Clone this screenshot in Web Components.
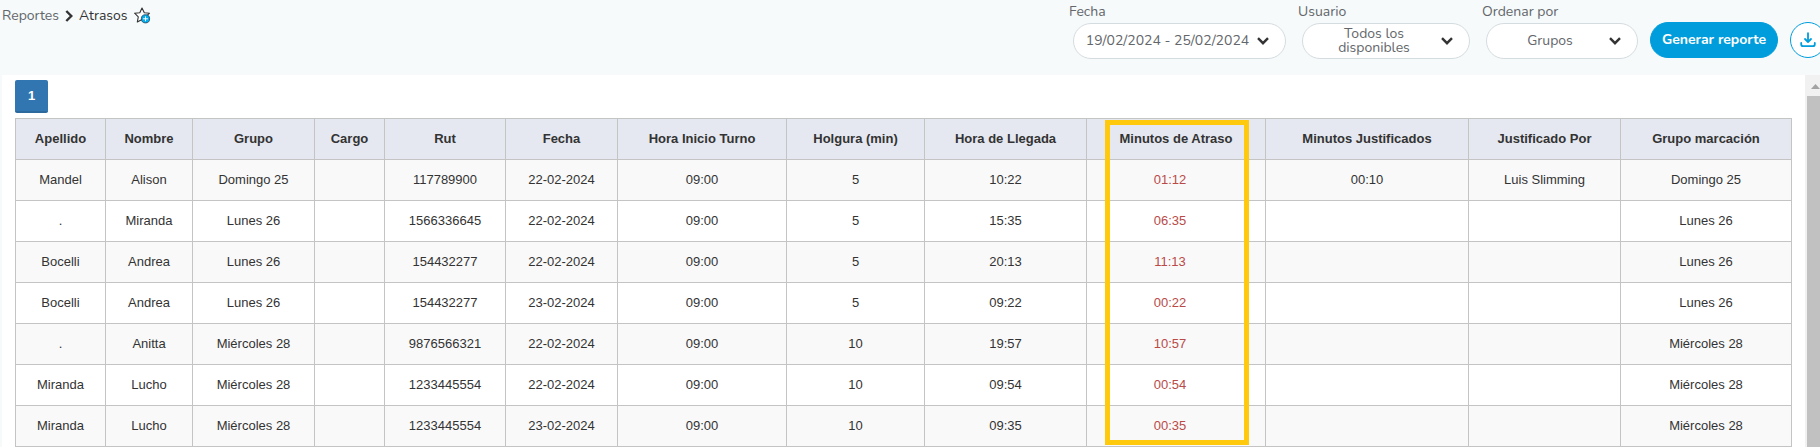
<!DOCTYPE html>
<html lang="es">
<head>
<meta charset="utf-8">
<meta name="viewport" content="width=device-width, initial-scale=1">
<title>Reportes - Atrasos</title>
<style>
  :root {
    --page: #f6fafb;
    --primary: #009ddc;
    --text: #333333;
    --muted: #63666a;
    --border: #d5dcdf;
    --font-ui: Nunito, Lato, sans-serif;
    --font-table: "Liberation Sans", Arial, sans-serif;
  }

  body {
    margin: 0;
    background: var(--page);
    color: var(--text);
    font-family: var(--font-ui);
    font-size: 14px;
  }
</style>
</head>
<body>
<late-report></late-report>

<script>
const CHEVRON = `
  <svg class="chevron" width="12" height="8" viewBox="0 0 12 8" aria-hidden="true">
    <path d="M1 1.2 6 6.2 11 1.2" fill="none" stroke="#333" stroke-width="2.4"/>
  </svg>`;

class BreadCrumb extends HTMLElement {
  constructor() {
    super();
    this.attachShadow({ mode: 'open' });
  }

  connectedCallback() {
    this.shadowRoot.innerHTML = `
      <style>
        :host { display: block; }
        nav {
          display: flex;
          align-items: center;
          gap: 6px;
          line-height: 16px;
        }
        a { color: var(--muted); text-decoration: none; }
        button {
          display: flex;
          padding: 0;
          border: 0;
          background: none;
          cursor: pointer;
        }
      </style>
      <nav aria-label="Ruta">
        <a href="#reportes">Reportes</a>
        <svg width="8" height="12" viewBox="0 0 8 12" aria-hidden="true">
          <path d="M1.3 1 6.3 6 1.3 11" fill="none" stroke="#333" stroke-width="2.4"/>
        </svg>
        <span aria-current="page"><slot></slot></span>
        <button aria-label="Agregar a favoritos">
          <svg width="17" height="17" viewBox="0 0 17 17">
            <path d="M8 1 10.3 5.7 15.5 6.2 11.7 9.8 12.7 15 8 12.5 3.3 15 4.3 9.8.6 6.2 5.8 5.7Z" fill="#fff" stroke="#333" stroke-width="1.1" stroke-linejoin="round"/>
            <circle cx="11.5" cy="11.8" r="4.1" fill="#00aeef" stroke="#214f69" stroke-width=".9"/>
            <path d="M11.5 9.4v4.8M9.1 11.8h4.8" stroke="#fff" stroke-width="1"/>
          </svg>
        </button>
      </nav>
    `;
  }
}

class FilterField extends HTMLElement {
  constructor() {
    super();
    this.attachShadow({ mode: 'open' });
  }

  connectedCallback() {
    const label = this.getAttribute('label');
    const value = this.getAttribute('value');
    const isSelect = this.getAttribute('type') === 'select';
    const control = isSelect
      ? `<select id="control"><option>${value}</option></select>${CHEVRON}`
      : `<button id="control" aria-haspopup="true"><span>${value}</span>${CHEVRON}</button>`;

    this.shadowRoot.innerHTML = `
      <style>
        :host { display: block; flex: none; }
        label {
          display: block;
          color: var(--muted);
          line-height: 16px;
          margin-bottom: 3px;
        }
        .box {
          display: grid;
          align-items: center;
          margin-left: 4px;
        }
        button, select {
          grid-area: 1 / 1;
          box-sizing: border-box;
          width: 100%;
          height: 36px;
          border: 1px solid var(--border);
          border-radius: 18px;
          background: #fff;
          color: var(--muted);
          font: inherit;
          line-height: 14px;
          text-align: center;
          cursor: pointer;
        }
        button {
          display: flex;
          align-items: center;
          gap: 8px;
          padding: 0 16px 0 12px;
        }
        button span {
          flex: 1;
          white-space: nowrap;
        }
        :host([label="Fecha"]) button {
          gap: 6px;
          padding-left: 10px;
        }
        select {
          appearance: none;
          padding: 0 36px 0 12px;
          text-align-last: center;
        }
        .chevron { flex: none; }
        .box > .chevron {
          grid-area: 1 / 1;
          justify-self: end;
          margin-right: 17px;
          pointer-events: none;
        }
      </style>
      <label for="control">${label}</label>
      <div class="box">${control}</div>
    `;
  }
}

class ActionButton extends HTMLElement {
  constructor() {
    super();
    this.attachShadow({ mode: 'open' });
  }

  connectedCallback() {
    const name = this.getAttribute('name');
    this.shadowRoot.innerHTML = `
      <style>
        :host { display: block; flex: none; }
        button {
          display: flex;
          align-items: center;
          justify-content: center;
          box-sizing: border-box;
          width: 100%;
          height: 36px;
          padding: 0 0 2px;
          border: 1px solid var(--primary);
          border-radius: 18px;
          background: var(--primary);
          color: #fff;
          font: inherit;
          font-weight: 700;
          cursor: pointer;
        }
        :host([outline]) button {
          padding: 0;
          background: #fff;
          color: var(--primary);
        }
      </style>
      <button ${name ? `aria-label="${name}"` : ''}><slot></slot></button>
    `;
  }
}

class ReportTable extends HTMLElement {
  constructor() {
    super();
    this.attachShadow({ mode: 'open' });
    this.columns = [
      ['Apellido', 90], ['Nombre', 87], ['Grupo', 122], ['Cargo', 70], ['Rut', 121],
      ['Fecha', 112], ['Hora Inicio Turno', 169], ['Holgura (min)', 138],
      ['Hora de Llegada', 162], ['Minutos de Atraso', 179],
      ['Minutos Justificados', 203], ['Justificado Por', 152], ['Grupo marcación', 171]
    ];
    this.rows = [
      ['Mandel', 'Alison', 'Domingo 25', '', '117789900', '22-02-2024', '09:00', '5', '10:22', '01:12', '00:10', 'Luis Slimming', 'Domingo 25'],
      ['.', 'Miranda', 'Lunes 26', '', '1566336645', '22-02-2024', '09:00', '5', '15:35', '06:35', '', '', 'Lunes 26'],
      ['Bocelli', 'Andrea', 'Lunes 26', '', '154432277', '22-02-2024', '09:00', '5', '20:13', '11:13', '', '', 'Lunes 26'],
      ['Bocelli', 'Andrea', 'Lunes 26', '', '154432277', '23-02-2024', '09:00', '5', '09:22', '00:22', '', '', 'Lunes 26'],
      ['.', 'Anitta', 'Miércoles 28', '', '9876566321', '22-02-2024', '09:00', '10', '19:57', '10:57', '', '', 'Miércoles 28'],
      ['Miranda', 'Lucho', 'Miércoles 28', '', '1233445554', '22-02-2024', '09:00', '10', '09:54', '00:54', '', '', 'Miércoles 28'],
      ['Miranda', 'Lucho', 'Miércoles 28', '', '1233445554', '23-02-2024', '09:00', '10', '09:35', '00:35', '', '', 'Miércoles 28']
    ];
  }

  connectedCallback() {
    const cols = this.columns.map(([, width]) => `<col style="width: ${width}px">`).join('');
    const head = this.columns.map(([name]) => `<th scope="col">${name}</th>`).join('');
    const body = this.rows.map(row => `
      <tr>${row.map((cell, i) => `<td${i === 9 ? ' class="late"' : ''}>${cell}</td>`).join('')}</tr>`).join('');

    this.shadowRoot.innerHTML = `
      <style>
        :host {
          display: block;
          position: relative;
          font-family: var(--font-table);
          font-size: 13px;
        }
        table {
          width: 100%;
          table-layout: fixed;
          border-collapse: collapse;
          line-height: 20px;
          text-align: center;
        }
        th, td {
          height: 20px;
          padding: 10px 0;
          border: 1px solid #c4c4c4;
        }
        th { background: #e5e8f0; }
        tbody tr { background: #fff; }
        tbody tr:nth-child(odd) { background: #f9f9f9; }
        .late {
          padding-right: 12px;
          color: #b94a48;
        }
        /* frame over the "Minutos de Atraso" column */
        .frame {
          position: absolute;
          top: 2px;
          bottom: 2px;
          left: calc(100% * 1071 / 1776 + 18px);
          width: calc(100% * 179 / 1776 - 35px);
          box-sizing: border-box;
          border: 5px solid #ffc90e;
          pointer-events: none;
        }
      </style>
      <table>
        <colgroup>${cols}</colgroup>
        <thead><tr>${head}</tr></thead>
        <tbody>${body}</tbody>
      </table>
      <div class="frame"></div>
    `;
  }
}

class ScrollRail extends HTMLElement {
  constructor() {
    super();
    this.attachShadow({ mode: 'open' });
  }

  connectedCallback() {
    this.shadowRoot.innerHTML = `
      <style>
        :host {
          display: flex;
          flex: none;
          flex-direction: column;
          width: 15px;
          overflow: hidden;
          background: #f1f1f1;
        }
        svg { flex: none; margin: 9px 0 7px 6px; }
        .thumb { flex: 1; margin-left: 2px; background: #c1c1c1; }
      </style>
      <svg width="9" height="5" viewBox="0 0 9 5" aria-hidden="true">
        <path d="M0 5 4.5 0 9 5Z" fill="#a3a3a3"/>
      </svg>
      <div class="thumb"></div>
    `;
  }
}

class LateReport extends HTMLElement {
  constructor() {
    super();
    this.attachShadow({ mode: 'open' });
  }

  connectedCallback() {
    this.shadowRoot.innerHTML = `
      <style>
        :host {
          display: flex;
          flex-direction: column;
          min-height: 100vh;
          overflow: hidden;
        }
        header {
          display: flex;
          align-items: flex-start;
          justify-content: space-between;
          height: 75px;
        }
        bread-crumb { padding: 7px 0 0 2px; }
        .filters {
          display: flex;
          align-items: flex-end;
          gap: 12px;
          padding-top: 4px;
          margin-right: -6px;
        }
        .range { width: 217px; }
        .user { width: 172px; }
        .order { width: 156px; }
        action-button { width: 128px; margin-bottom: 1px; }
        action-button[outline] { width: 36px; }
        main {
          display: flex;
          flex: 1;
          margin-left: 2px;
          background: #fff;
        }
        .content { flex: 1; padding: 5px 13px 0; }
        .page {
          display: block;
          box-sizing: border-box;
          width: 33px;
          height: 33px;
          margin-bottom: 5px;
          border-bottom: 2px solid #2c699d;
          border-radius: 2px;
          background: #3276b1;
          color: #fff;
          font: 700 13px/31px var(--font-table);
          text-align: center;
          text-decoration: none;
        }
      </style>
      <header>
        <bread-crumb>Atrasos</bread-crumb>
        <div class="filters">
          <filter-field class="range" label="Fecha" value="19/02/2024 - 25/02/2024"></filter-field>
          <filter-field class="user" label="Usuario" value="Todos los<br>disponibles"></filter-field>
          <filter-field class="order" type="select" label="Ordenar por" value="Grupos"></filter-field>
          <action-button>Generar reporte</action-button>
          <action-button outline name="Descargar">
            <svg width="16" height="16" viewBox="0 0 16 16" fill="none" stroke="currentColor" stroke-width="1.8" stroke-linecap="round" stroke-linejoin="round">
              <path d="M8 1.2v8.6M5 7 8 10 11 7M1.2 11v1.2a2 2 0 0 0 2 2h9.6a2 2 0 0 0 2-2V11"/>
            </svg>
          </action-button>
        </div>
      </header>
      <main>
        <div class="content">
          <a class="page" href="#1">1</a>
          <report-table></report-table>
        </div>
        <scroll-rail></scroll-rail>
      </main>
    `;
  }
}

customElements.define('bread-crumb', BreadCrumb);
customElements.define('filter-field', FilterField);
customElements.define('action-button', ActionButton);
customElements.define('report-table', ReportTable);
customElements.define('scroll-rail', ScrollRail);
customElements.define('late-report', LateReport);
</script>
</body>
</html>
